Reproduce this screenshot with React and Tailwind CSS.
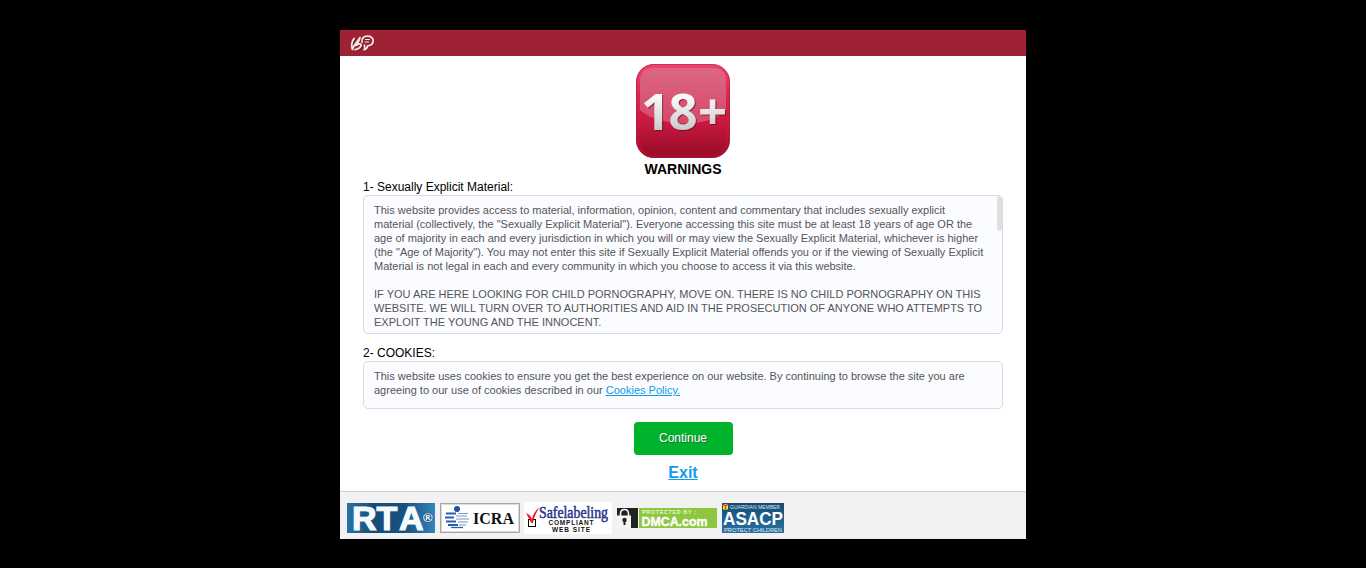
const SANS = "font-['Liberation_Sans',Arial,sans-serif]";

const LOGO_LEAF = "M4.200 4.500C1.600 7 1.200 12 2.400 15.500C3.500 11.500 7 8.500 10 3.500C9.500 6 7.500 9.200 6 11.500C8.500 9.500 11 9.300 11.200 10.800C11 13 8 15.400 5 15.600";
const LOGO_BUBBLE = "M12 8.200C11 4.500 14 2 18 2.200C21.500 2.400 23.600 4.600 23.200 7.300C22.800 10 20.200 11.700 17.600 11.800C17.300 13.600 16 15.200 14.200 15.800C15 14.200 15 13 14.400 11.200";

function HeaderLogo() {
  return (
    <svg width="26" height="20" viewBox="0 0 26 20" fill="none" strokeLinecap="round" strokeLinejoin="round">
      <g stroke="#5e1020" strokeOpacity="0.5" strokeWidth="2" transform="translate(0.8 0.9)">
        <path d={LOGO_LEAF} />
        <path d={LOGO_BUBBLE} />
      </g>
      <g stroke="#f3e6e4" strokeWidth="1.800">
        <path d={LOGO_LEAF} />
        <path d={LOGO_BUBBLE} />
        <path d="M15.400 5.500H19.400M15.200 8H18.600" strokeWidth="1.200" />
      </g>
    </svg>
  );
}

function AgeBadge() {
  return (
    <svg width="94" height="94" viewBox="0 0 94 94">
      <defs>
        <linearGradient id="base" x1="0" y1="0" x2="0" y2="1">
          <stop offset="0" stopColor="#f0446f" />
          <stop offset="0.3" stopColor="#d92a52" />
          <stop offset="0.65" stopColor="#c9183f" />
          <stop offset="1" stopColor="#a00d29" />
        </linearGradient>
        <linearGradient id="inner" x1="0" y1="0" x2="0" y2="1">
          <stop offset="0" stopColor="#d23c60" />
          <stop offset="0.6" stopColor="#cb1a41" />
          <stop offset="1" stopColor="#9a0c28" />
        </linearGradient>
        <linearGradient id="digit" gradientUnits="userSpaceOnUse" x1="0" y1="29" x2="0" y2="67">
          <stop offset="0" stopColor="#ffffff" />
          <stop offset="1" stopColor="#c8c8c8" />
        </linearGradient>
      </defs>
      <rect width="94" height="94" rx="18" fill="url(#base)" />
      <rect x="0.500" y="0.500" width="93" height="93" rx="17.500" fill="none" stroke="#a4203e" strokeOpacity="0.55" />
      <rect x="4" y="4" width="86" height="86" rx="14" fill="url(#inner)" />
      <path d="M4 18Q4 4 18 4H76Q90 4 90 18V46C75 64 24 64 4 46Z" fill="#fff" fillOpacity="0.220" />
      <text
        x="5 32.500 62"
        y="66"
        fill="url(#digit)"
        className="font-['Open_Sans',sans-serif] text-[51px] font-bold [filter:drop-shadow(1px_1px_0.5px_rgba(90,5,20,0.6))]"
      >
        18+
      </text>
    </svg>
  );
}

function RtaBadge() {
  return (
    <svg width="88" height="30" viewBox="0 0 88 30">
      <defs>
        <linearGradient id="rta" x1="0" y1="0" x2="1" y2="0">
          <stop offset="0" stopColor="#2873a6" />
          <stop offset="0.3" stopColor="#174c78" />
          <stop offset="0.65" stopColor="#17507e" />
          <stop offset="1" stopColor="#3484bb" />
        </linearGradient>
      </defs>
      <rect width="88" height="30" fill="url(#rta)" />
      <text x="5 29.500 52" y="26.800" fontFamily="Liberation Sans" fontWeight="700" fontSize="34" fill="#f5faff" stroke="#f5faff" strokeWidth="1.200">RTA</text>
      <text x="76" y="18.500" fontFamily="Liberation Sans" fontWeight="700" fontSize="13" fill="#fff" stroke="#1f5f90" strokeWidth="1.500" paintOrder="stroke">®</text>
    </svg>
  );
}

function IcraBadge() {
  return (
    <svg width="80" height="30" viewBox="0 0 80 30">
      <rect width="80" height="30" fill="#fff" />
      <path d="M0.500 30V0.500H79.500V29.500H0" fill="none" stroke="#a5a5a5" />
      <path d="M1.500 29V1.500H78.500V28.500H1" fill="none" stroke="#dadada" />
      <circle cx="17" cy="6" r="3" fill="#2450a0" />
      <g stroke="#2b5eaf" strokeWidth="2">
        <path d="M6 10.500H16M5 14.500H14M6 18.500H16M8 22H18" />
        <path d="M11 24.500H23" strokeWidth="1.300" />
      </g>
      <path d="M18 10.500H28M16 13H27M16 16H29M18 19H28M19 22H26" stroke="#7197ce" strokeWidth="1.200" />
      <text x="33" y="21" fontFamily="Liberation Serif" fontWeight="700" fontSize="17" textLength="41" lengthAdjust="spacingAndGlyphs" fill="#111">ICRA</text>
    </svg>
  );
}

function SafelabelingBadge() {
  return (
    <svg width="88" height="32" viewBox="0 0 88 32">
      <rect width="88" height="32" fill="#fff" />
      <text x="15" y="15.500" fontFamily="Liberation Serif" fontSize="16" textLength="69" lengthAdjust="spacingAndGlyphs" fill="#27348b" stroke="#27348b" strokeWidth="0.5">Safelabeling</text>
      <text x="24.500" y="23.300" fontFamily="Liberation Sans" fontWeight="700" fontSize="6.500" textLength="45" fill="#111">COMPLIANT</text>
      <text x="28" y="30" fontFamily="Liberation Sans" fontWeight="700" fontSize="6.500" textLength="38" fill="#111">WEB SITE</text>
      <rect x="4.500" y="17.500" width="7" height="7" fill="#fff" stroke="#000" />
      <path d="M2 11L5.500 13L8 17Q10 9 16 5Q10.500 12 8.800 21.500L7 20.500Z" fill="#f0141e" />
    </svg>
  );
}

function DmcaBadge() {
  return (
    <svg width="100" height="20" viewBox="0 0 100 20">
      <rect width="21" height="20" fill="#222" />
      <rect x="21" width="1" height="20" fill="#fff" />
      <rect x="22" width="78" height="20" fill="#8dc63f" />
      <path d="M3.500 8V6Q3.500 1.500 7.500 1.500T11.500 6V8" fill="none" stroke="#f5f5f5" strokeWidth="1.600" />
      <rect y="7.500" width="14" height="12.500" fill="#f5f5f5" />
      <circle cx="7.500" cy="12" r="2.200" fill="#222" />
      <path d="M6.500 12H8.500V17H6.500Z" fill="#222" />
      <text x="25" y="6" fontFamily="Liberation Sans" fontWeight="700" fontSize="5.500" textLength="54" fill="#e9f6d6">PROTECTED BY :</text>
      <text x="24.500" y="18" fontFamily="Liberation Sans" fontWeight="700" fontSize="12" textLength="66" lengthAdjust="spacingAndGlyphs" fill="#fff" stroke="#fff" strokeWidth="0.4">DMCA.com</text>
    </svg>
  );
}

function AsacpBadge() {
  return (
    <svg width="62" height="30" viewBox="0 0 62 30">
      <defs>
        <linearGradient id="asacp" x1="0" y1="0" x2="0" y2="1">
          <stop offset="0" stopColor="#174b75" />
          <stop offset="1" stopColor="#2871a4" />
        </linearGradient>
      </defs>
      <rect width="62" height="30" fill="url(#asacp)" />
      <rect x="1" y="1" width="5" height="5.500" fill="#f9df20" />
      <path d="M1 1L3.500 3L6 1M3.500 3V6" stroke="#e3262d" strokeWidth="1.100" fill="none" />
      <text x="8" y="6.300" fontFamily="Liberation Sans" fontSize="6" textLength="50" lengthAdjust="spacingAndGlyphs" fill="#dbe6ee">GUARDIAN MEMBER</text>
      <text x="1" y="21.500" fontFamily="Liberation Sans" fontWeight="700" fontSize="18" textLength="60" lengthAdjust="spacingAndGlyphs" fill="#fff">ASACP</text>
      <text x="2" y="28.500" fontFamily="Liberation Sans" fontSize="6" textLength="58" lengthAdjust="spacingAndGlyphs" fill="#e2ecf3">PROTECT CHILDREN</text>
    </svg>
  );
}

export default function App() {
  return (
    <div className={`flex h-[568px] justify-center bg-black pt-[30px] ${SANS}`}>
      <main className="flex h-[509px] w-[686px] flex-col bg-white">
        <header className="h-[26px] shrink-0 bg-[#9f2136] pt-1 pl-[10px]">
          <HeaderLogo />
        </header>
        <section className="flex h-[435px] shrink-0 flex-col px-[23px] pt-2">
          <div className="flex h-[94px] shrink-0 justify-center">
            <AgeBadge />
          </div>
          <h1 className="mt-[3px] h-4 text-center text-[14px] leading-4 font-bold text-black">WARNINGS</h1>
          <h2 className="mt-[3px] h-[15px] text-[12px] leading-[14px] text-black">1- Sexually Explicit Material:</h2>
          <div className="flex h-[139px] shrink-0 justify-between rounded-[5px] border border-[#d9dbdd] bg-[#fbfcff] pl-[10px] text-[11px] leading-[14px] text-[#555]">
            <div className="pt-[7px] whitespace-nowrap">
              <p>
                This website provides access to material, information, opinion, content and commentary that includes sexually explicit<br />
                material (collectively, the "Sexually Explicit Material"). Everyone accessing this site must be at least 18 years of age OR the<br />
                age of majority in each and every jurisdiction in which you will or may view the Sexually Explicit Material, whichever is higher<br />
                (the "Age of Majority"). You may not enter this site if Sexually Explicit Material offends you or if the viewing of Sexually Explicit<br />
                Material is not legal in each and every community in which you choose to access it via this website.
              </p>
              <p className="mt-[14px]">
                IF YOU ARE HERE LOOKING FOR CHILD PORNOGRAPHY, MOVE ON. THERE IS NO CHILD PORNOGRAPHY ON THIS<br />
                WEBSITE. WE WILL TURN OVER TO AUTHORITIES AND AID IN THE PROSECUTION OF ANYONE WHO ATTEMPTS TO<br />
                EXPLOIT THE YOUNG AND THE INNOCENT.
              </p>
            </div>
            <div className="h-[35px] w-[5px] rounded-[3px] bg-[#e0e0e0]" />
          </div>
          <h2 className="mt-3 h-[15px] text-[12px] leading-[14px] text-black">2- COOKIES:</h2>
          <div className="h-12 shrink-0 rounded-[5px] border border-[#d9dbdd] bg-[#fbfcff] px-[10px] pt-[7px] text-[11px] leading-[14px] whitespace-nowrap text-[#555]">
            This website uses cookies to ensure you get the best experience on our website. By continuing to browse the site you are<br />
            agreeing to our use of cookies described in our <a className="text-[#0d9ae8] underline">Cookies Policy.</a>
          </div>
          <button className="mt-[13px] ml-[271px] h-[33px] w-[99px] shrink-0 rounded-[4px] bg-[#00b32d] pr-px pb-[2px] text-[12px] text-white [text-shadow:1px_1px_1px_#246b2f]">Continue</button>
          <a className="mt-[9px] text-center text-[16px] leading-[18px] font-bold text-[#129ce7] underline">Exit</a>
        </section>
        <footer className="flex h-12 shrink-0 items-start border-t border-[#d0d0d0] bg-[#f2f2f2] pl-[7px]">
          <div className="mt-[11px]"><RtaBadge /></div>
          <div className="mt-[11px] ml-[5px]"><IcraBadge /></div>
          <div className="mt-[10px] ml-1"><SafelabelingBadge /></div>
          <div className="mt-4 ml-[5px]"><DmcaBadge /></div>
          <div className="mt-[11px] ml-[5px]"><AsacpBadge /></div>
        </footer>
      </main>
    </div>
  );
}
